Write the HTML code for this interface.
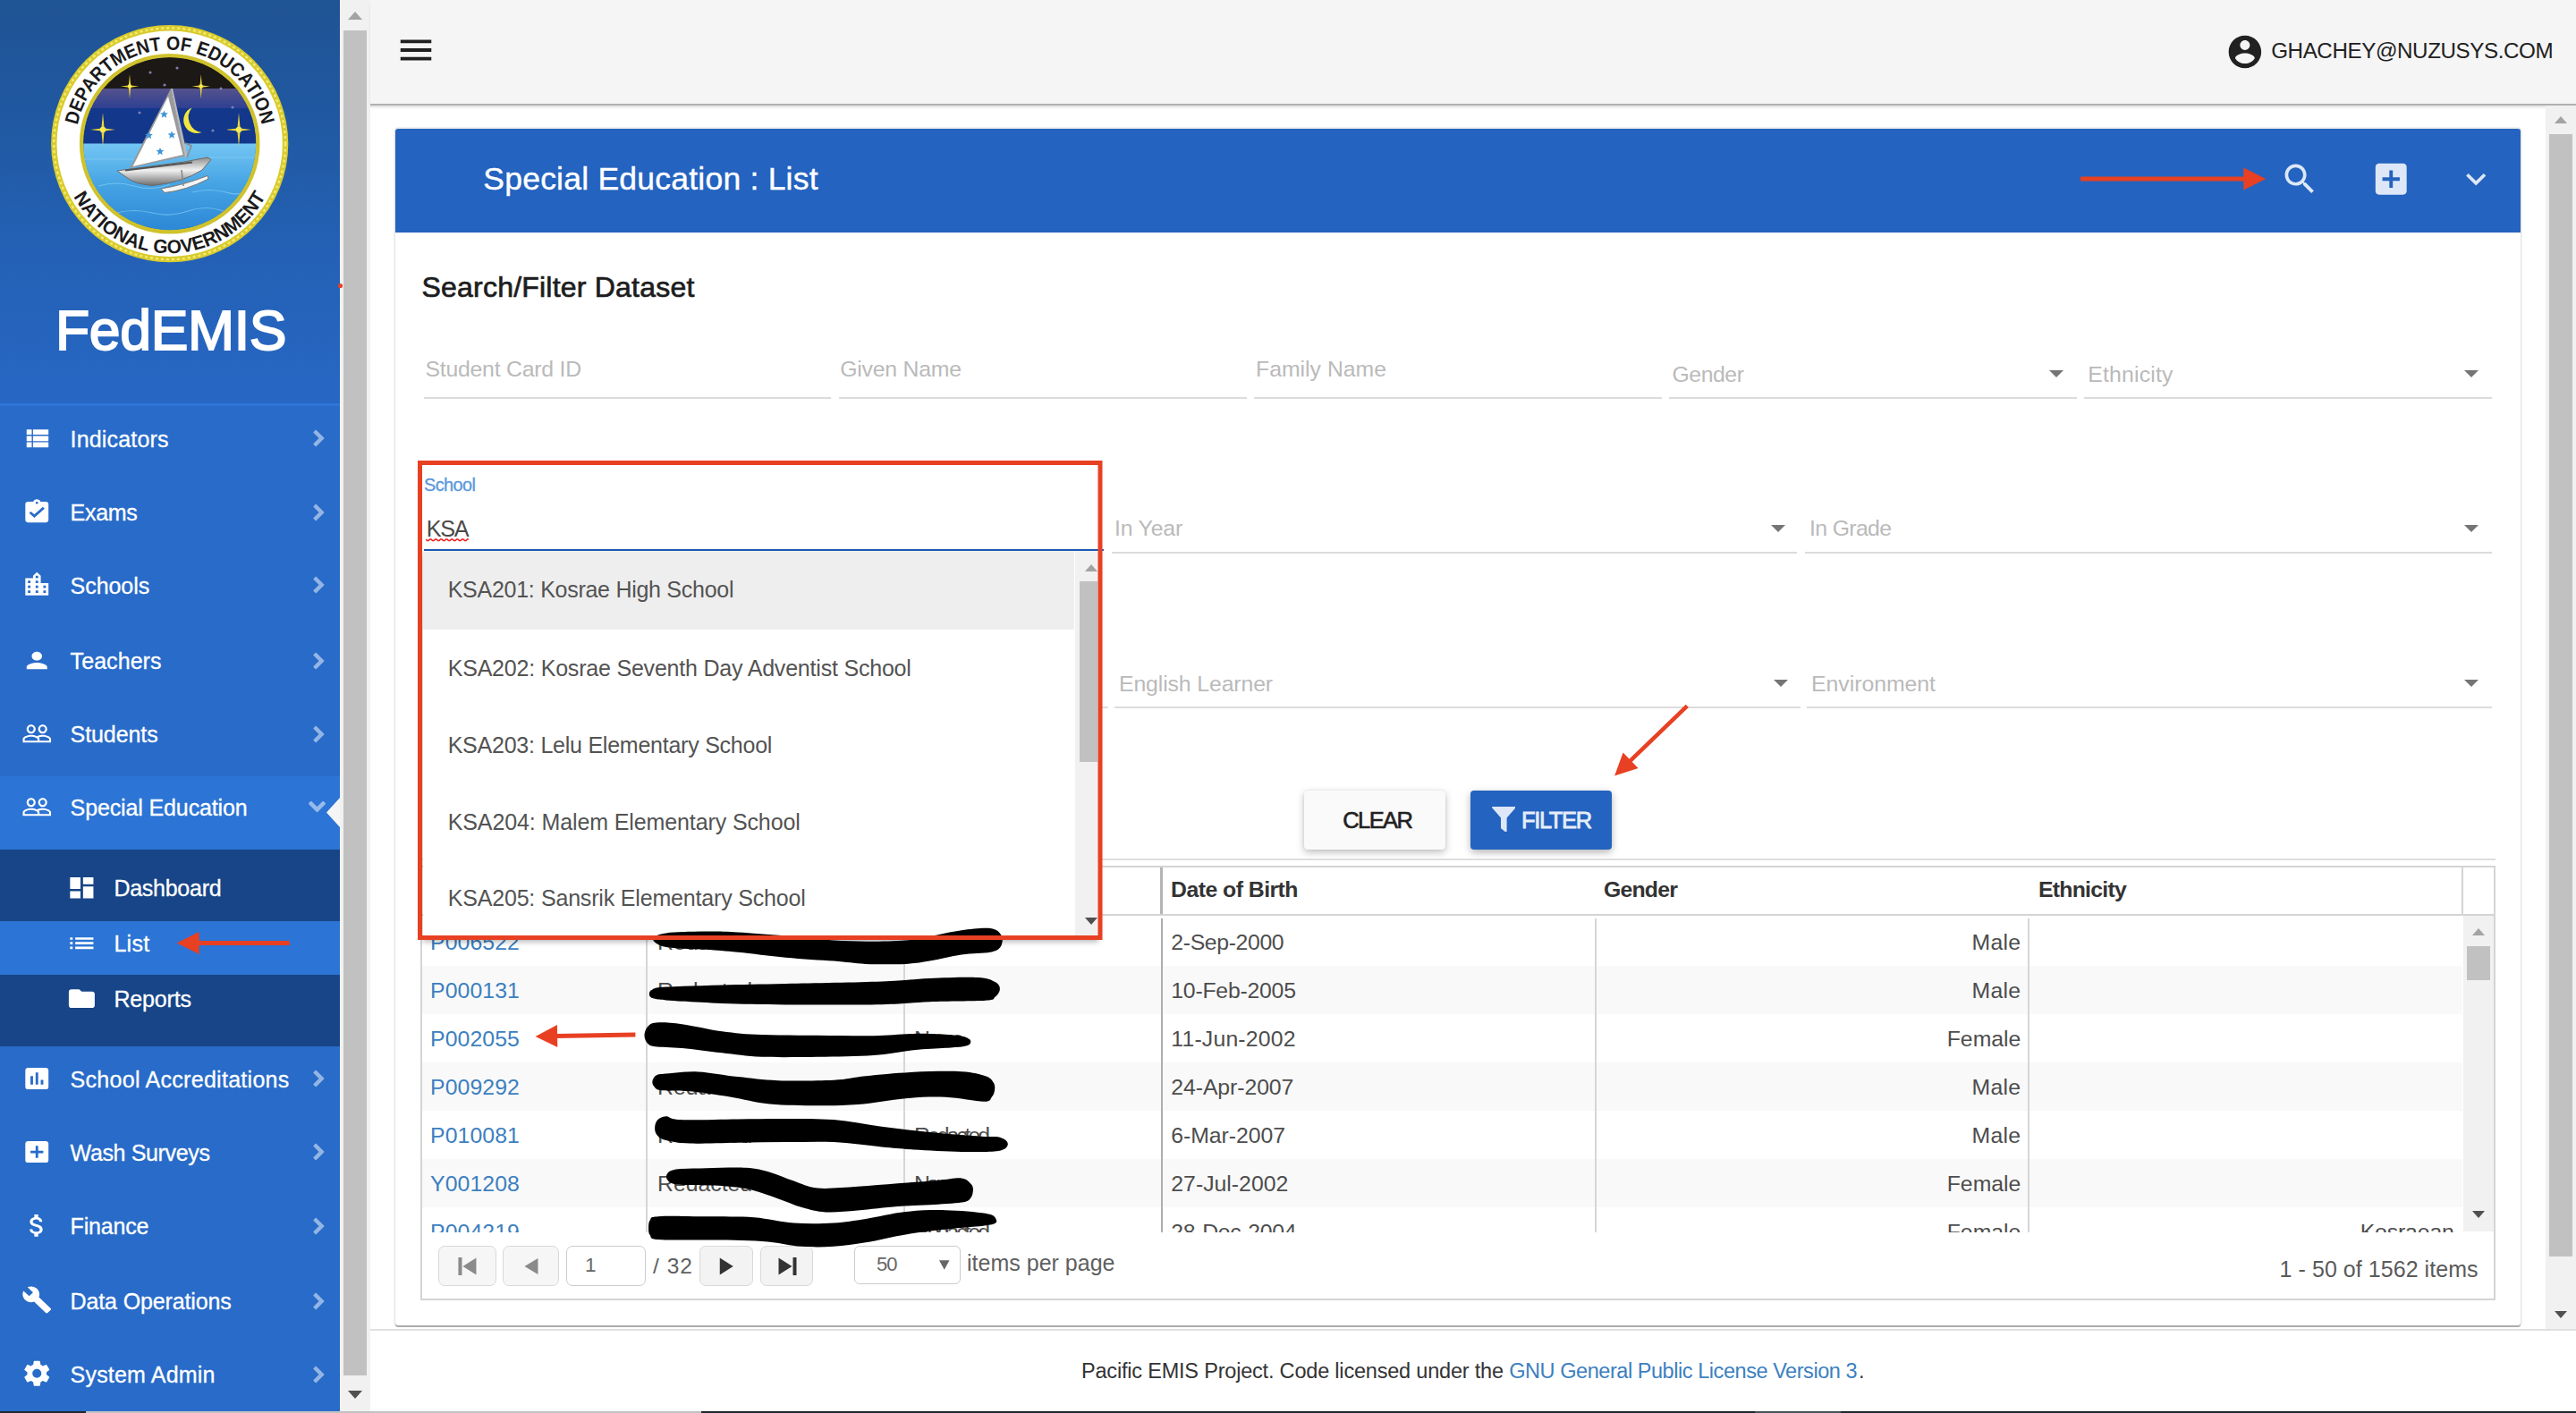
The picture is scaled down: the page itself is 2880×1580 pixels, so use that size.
<!DOCTYPE html>
<html lang="en">
<head>
<meta charset="utf-8">
<title>FedEMIS - Special Education : List</title>
<style>
html,body{margin:0;padding:0;}
body{width:2880px;height:1580px;overflow:hidden;position:relative;background:#fff;font-family:"Liberation Sans",sans-serif;}
.t{position:absolute;white-space:pre;line-height:1;margin:0;padding:0;text-decoration:none;font-weight:400;}
.ic{position:absolute;display:block;overflow:visible;}
.abs{position:absolute;}
#sidebar{position:absolute;left:0;top:0;width:380px;height:1578px;overflow:hidden;background:#286bc9;}
#sidebar .brand{position:absolute;left:0;top:0;width:380px;height:452px;background:linear-gradient(180deg,#1f5494 0px,#2058a0 120px,#2461b6 290px,#2767c4 452px);}
#sidebar ul{list-style:none;margin:0;padding:0;}
#sidebar li{margin:0;padding:0;}
.sbtrack{position:absolute;background:#f1f1f1;}
.sbthumb{position:absolute;background:#c1c1c1;}
#topbar{position:absolute;left:414px;top:0;width:2466px;height:116px;background:#f5f5f5;border-bottom:2px solid #b0b0b0;box-shadow:0 2px 0 #e6e6e6,0 3px 3px rgba(0,0,0,.06);}
#main{position:absolute;left:414px;top:118px;width:2432px;height:1366px;background:#fff;}
#panel{position:absolute;left:442px;top:144px;width:2376px;height:1338px;background:#fff;border-radius:3px;box-shadow:0 2px 0 0 #ababab,0 0 0 1.5px #e6e6e6;}
#panel .hd{position:absolute;left:0;top:0;width:2376px;height:116px;background:#2463bf;border-radius:3px 3px 0 0;}
.ul{position:absolute;height:2px;background:#dcdcdc;}
.arr{position:absolute;width:0;height:0;border-left:8px solid transparent;border-right:8px solid transparent;border-top:8px solid #757575;}

</style>
</head>
<body>
<nav id="sidebar">
<div class="brand">
<svg class="abs" style="left:0;top:0;width:380px;height:330px" viewBox="0 0 380 330"><defs><clipPath id="lgc"><circle cx="189.7" cy="160.7" r="96.5"/></clipPath><linearGradient id="lgsky" x1="0" y1="0" x2="0" y2="1"><stop offset="0" stop-color="#55528c"/><stop offset="1" stop-color="#2c3f93"/></linearGradient><linearGradient id="lgsea" x1="0" y1="0" x2="0" y2="1"><stop offset="0" stop-color="#73c6f3"/><stop offset="0.45" stop-color="#46a4e4"/><stop offset="1" stop-color="#2a86d6"/></linearGradient><linearGradient id="lghull" x1="0" y1="0" x2="0" y2="1"><stop offset="0" stop-color="#8d8d8d"/><stop offset="0.45" stop-color="#f2f2f2"/><stop offset="1" stop-color="#6e6e6e"/></linearGradient><path id="arcT" d="M 84.7 160.7 A 105 105 0 0 1 294.7 160.7"/><path id="arcB" d="M 67.2 160.7 A 122.5 122.5 0 0 0 312.2 160.7"/></defs><circle cx="189.7" cy="160.7" r="129.4" fill="#fff" stroke="#d9cb2e" stroke-width="6.4"/><circle cx="189.7" cy="160.7" r="129.4" fill="none" stroke="#f3ec74" stroke-width="2.4" stroke-dasharray="3 3"/><circle cx="189.7" cy="160.7" r="98.5" fill="#0f2f7d" stroke="#cfc22c" stroke-width="4.6"/><g clip-path="url(#lgc)"><rect x="90" y="60" width="200" height="42" fill="#1c1815"/><rect x="90" y="99" width="200" height="23" fill="url(#lgsky)"/><rect x="90" y="121" width="200" height="41" fill="#12378b"/><rect x="90" y="160.5" width="200" height="100" fill="url(#lgsea)"/><path d="M95 178 H150 M225 176 H285 M110 208 q20 -6 40 0 t40 -2 M215 215 q20 -5 38 0 t30 -4 M130 238 q20 -5 40 0 t40 -2 t40 0" stroke="#8fd3f7" stroke-width="1.2" fill="none" opacity=".6"/><path d="M0 -19 L1.6 -1.6 L14 0 L1.6 1.6 L0 19 L-1.6 1.6 L-14 0 L-1.6 -1.6 Z" transform="translate(145 96.6) scale(0.72)" fill="#e9d53a"/><circle cx="145" cy="96.6" r="2.3" fill="#f7ea58"/><path d="M0 -19 L1.6 -1.6 L14 0 L1.6 1.6 L0 19 L-1.6 1.6 L-14 0 L-1.6 -1.6 Z" transform="translate(224.7 96.6) scale(0.72)" fill="#e9d53a"/><circle cx="224.7" cy="96.6" r="2.3" fill="#f7ea58"/><path d="M0 -19 L1.6 -1.6 L14 0 L1.6 1.6 L0 19 L-1.6 1.6 L-14 0 L-1.6 -1.6 Z" transform="translate(115 145) scale(1.0)" fill="#e9d53a"/><circle cx="115" cy="145" r="3.2" fill="#f7ea58"/><path d="M0 -19 L1.6 -1.6 L14 0 L1.6 1.6 L0 19 L-1.6 1.6 L-14 0 L-1.6 -1.6 Z" transform="translate(267 145) scale(1.0)" fill="#e9d53a"/><circle cx="267" cy="145" r="3.2" fill="#f7ea58"/><circle cx="168" cy="81" r="1.6" fill="#7d7fae"/><circle cx="198" cy="76" r="1.6" fill="#7d7fae"/><circle cx="184" cy="95" r="1.6" fill="#7d7fae"/><circle cx="247" cy="99" r="1.6" fill="#7d7fae"/><circle cx="156" cy="126" r="1.6" fill="#7d7fae"/><circle cx="260" cy="120" r="1.6" fill="#7d7fae"/><circle cx="238" cy="146" r="1.6" fill="#7d7fae"/><path d="M214.5 120.5 a14.5 14.5 0 1 0 11 27.5 a17 17 0 0 1 -11 -27.5z" fill="#f4e640"/><path d="M145 188 L191 99 L207.5 174.5 Z" fill="#9a9a9a"/><path d="M148.5 186 L188 108 L204.5 173 Z" fill="#ffffff"/><path d="M191 99 L193 99 L210 176 L207 176 Z" fill="#b9b9b9"/><polygon points="183.5,123.4 184.7,126.3 187.9,126.6 185.5,128.6 186.2,131.7 183.5,130.1 180.8,131.7 181.5,128.6 179.1,126.6 182.3,126.3" fill="#3f95d6"/><polygon points="166.5,146.9 167.7,149.8 170.9,150.1 168.5,152.1 169.2,155.2 166.5,153.6 163.8,155.2 164.5,152.1 162.1,150.1 165.3,149.8" fill="#3f95d6"/><polygon points="192.0,146.4 193.2,149.3 196.4,149.6 194.0,151.6 194.7,154.7 192.0,153.1 189.3,154.7 190.0,151.6 187.6,149.6 190.8,149.3" fill="#3f95d6"/><polygon points="179.0,164.9 180.2,167.8 183.4,168.1 181.0,170.1 181.7,173.2 179.0,171.6 176.3,173.2 177.0,170.1 174.6,168.1 177.8,167.8" fill="#3f95d6"/><path d="M131 191 L206 181 L232 176 L236 178.5 L226 190 Q205 204 170 207.5 Q150 206 141 198 Z" fill="url(#lghull)" stroke="#6a6a6a" stroke-width="1"/><path d="M140 190.5 L215 181.5" stroke="#555" stroke-width="2" fill="none"/><path d="M180 211 Q205 207 232 196.5 L233 200 Q208 213 184 215.5 Z" fill="#f4f4f4" stroke="#777" stroke-width="1"/><path d="M203 190 L205 208 M209 176 L214 163 L207 160" stroke="#8a8a8a" stroke-width="1.6" fill="none"/></g><text font-family="'Liberation Sans',sans-serif" font-weight="700" font-size="21.5" fill="#1a1a1a" text-anchor="middle"><textPath href="#arcT" startOffset="50%" textLength="288" lengthAdjust="spacingAndGlyphs">DEPARTMENT OF EDUCATION</textPath></text><text font-family="'Liberation Sans',sans-serif" font-weight="700" font-size="21.5" fill="#1a1a1a" text-anchor="middle"><textPath href="#arcB" startOffset="50%" textLength="262" lengthAdjust="spacingAndGlyphs">NATIONAL GOVERNMENT</textPath></text></svg>
<h1 class="t" style="left:62.0px;top:337.8px;font-size:62.5px;letter-spacing:-0.357px;color:#fff;-webkit-text-stroke:1.9px #fff;">FedEMIS</h1>
</div>
<div class="abs" style="left:0;top:451px;width:380px;height:3px;background:#2f75d7"></div>
<div class="abs" style="left:0;top:868px;width:380px;height:82px;background:#2c74d5"></div>
<div class="abs" style="left:0;top:950px;width:380px;height:220px;background:#174587"></div>
<div class="abs" style="left:0;top:1030px;width:380px;height:60px;background:#2c74d5"></div>
<ul>
<li>
<svg class="ic" style="left:24.0px;top:472.9px;width:34.5px;height:34.5px;" viewBox="0 0 24 24"><path fill="#fff" d="M4 14h4v-4H4v4zm0 5h4v-4H4v4zM4 9h4V5H4v4zm5 5h12v-4H9v4zm0 5h12v-4H9v4zM9 5v4h12V5H9z"/></svg>
<a class="t" style="left:78.6px;top:478.8px;font-size:25px;letter-spacing:0.161px;color:#fff;-webkit-text-stroke:0.3px #fff;">Indicators</a>
<svg class="ic" style="left:338.9px;top:473.2px;width:34px;height:34.0px;opacity:.5;" viewBox="0 0 24 24"><path fill="#fff" stroke="#fff" stroke-width="1.2" stroke-linejoin="round" d="M10 6L8.59 7.41 13.17 12l-4.58 4.59L10 18l6-6z"/></svg>
</li>
<li>
<svg class="ic" style="left:24.0px;top:557.0px;width:34.5px;height:31.1px;" viewBox="0 0 24 24" preserveAspectRatio="none"><path fill="#fff" d="M19 3h-4.18C14.4 1.84 13.3 1 12 1c-1.3 0-2.4.84-2.82 2H5c-1.1 0-2 .9-2 2v14c0 1.1.9 2 2 2h14c1.1 0 2-.9 2-2V5c0-1.1-.9-2-2-2zm-7 0c.55 0 1 .45 1 1s-.45 1-1 1-1-.45-1-1 .45-1 1-1zm-2 14l-4-4 1.41-1.41L10 14.17l6.59-6.59L18 9l-8 8z"/></svg>
<a class="t" style="left:78.6px;top:561.1px;font-size:25px;letter-spacing:-0.281px;color:#fff;-webkit-text-stroke:0.3px #fff;">Exams</a>
<svg class="ic" style="left:338.9px;top:555.5px;width:34px;height:34.0px;opacity:.5;" viewBox="0 0 24 24"><path fill="#fff" stroke="#fff" stroke-width="1.2" stroke-linejoin="round" d="M10 6L8.59 7.41 13.17 12l-4.58 4.59L10 18l6-6z"/></svg>
</li>
<li>
<svg class="ic" style="left:24.0px;top:636.7px;width:34.5px;height:32.8px;" viewBox="0 0 24 24" preserveAspectRatio="none"><path fill="#fff" d="M15 11V5l-3-3-3 3v2H3v14h18V11h-6zm-8 8H5v-2h2v2zm0-4H5v-2h2v2zm0-4H5V9h2v2zm6 8h-2v-2h2v2zm0-4h-2v-2h2v2zm0-4h-2V9h2v2zm0-4h-2V5h2v2zm6 12h-2v-2h2v2zm0-4h-2v-2h2v2z"/></svg>
<a class="t" style="left:78.6px;top:642.7px;font-size:25px;letter-spacing:-0.065px;color:#fff;-webkit-text-stroke:0.3px #fff;">Schools</a>
<svg class="ic" style="left:338.9px;top:637.1px;width:34px;height:34.0px;opacity:.5;" viewBox="0 0 24 24"><path fill="#fff" stroke="#fff" stroke-width="1.2" stroke-linejoin="round" d="M10 6L8.59 7.41 13.17 12l-4.58 4.59L10 18l6-6z"/></svg>
</li>
<li>
<svg class="ic" style="left:24.0px;top:723.5px;width:34.5px;height:29.0px;" viewBox="0 0 24 24" preserveAspectRatio="none"><path fill="#fff" d="M12 12c2.21 0 4-1.79 4-4s-1.79-4-4-4-4 1.79-4 4 1.79 4 4 4zm0 2c-2.67 0-8 1.34-8 4v2h16v-2c0-2.66-5.33-4-8-4z"/></svg>
<a class="t" style="left:78.6px;top:727.1px;font-size:25px;letter-spacing:0.068px;color:#fff;-webkit-text-stroke:0.3px #fff;">Teachers</a>
<svg class="ic" style="left:338.9px;top:721.5px;width:34px;height:34.0px;opacity:.5;" viewBox="0 0 24 24"><path fill="#fff" stroke="#fff" stroke-width="1.2" stroke-linejoin="round" d="M10 6L8.59 7.41 13.17 12l-4.58 4.59L10 18l6-6z"/></svg>
</li>
<li>
<svg class="ic" style="left:24.0px;top:803.2px;width:34.5px;height:34.5px;" viewBox="0 0 24 24"><path fill="#fff" d="M16.5 13c-1.2 0-3.07.34-4.5 1-1.43-.67-3.3-1-4.5-1C5.33 13 1 14.08 1 16.25V19h22v-2.75c0-2.17-4.33-3.25-6.5-3.25zm-4 4.5h-10v-1.25c0-.54 2.56-1.75 5-1.75s5 1.21 5 1.75v1.25zm9 0H14v-1.25c0-.46-.2-.86-.52-1.22.88-.3 1.96-.53 3.02-.53 2.44 0 5 1.21 5 1.75v1.25zM7.5 12c1.93 0 3.5-1.57 3.5-3.5S9.43 5 7.5 5 4 6.57 4 8.5 5.57 12 7.5 12zm0-5.5c1.1 0 2 .9 2 2s-.9 2-2 2-2-.9-2-2 .9-2 2-2zm9 5.5c1.93 0 3.5-1.57 3.5-3.5S18.43 5 16.5 5 13 6.57 13 8.5s1.57 3.5 3.5 3.5zm0-5.5c1.1 0 2 .9 2 2s-.9 2-2 2-2-.9-2-2 .9-2 2-2z"/></svg>
<a class="t" style="left:78.6px;top:809.1px;font-size:25px;letter-spacing:-0.086px;color:#fff;-webkit-text-stroke:0.3px #fff;">Students</a>
<svg class="ic" style="left:338.9px;top:803.5px;width:34px;height:34.0px;opacity:.5;" viewBox="0 0 24 24"><path fill="#fff" stroke="#fff" stroke-width="1.2" stroke-linejoin="round" d="M10 6L8.59 7.41 13.17 12l-4.58 4.59L10 18l6-6z"/></svg>
</li>
<li>
<svg class="ic" style="left:24.0px;top:885.0px;width:34.5px;height:34.5px;" viewBox="0 0 24 24"><path fill="#fff" d="M16.5 13c-1.2 0-3.07.34-4.5 1-1.43-.67-3.3-1-4.5-1C5.33 13 1 14.08 1 16.25V19h22v-2.75c0-2.17-4.33-3.25-6.5-3.25zm-4 4.5h-10v-1.25c0-.54 2.56-1.75 5-1.75s5 1.21 5 1.75v1.25zm9 0H14v-1.25c0-.46-.2-.86-.52-1.22.88-.3 1.96-.53 3.02-.53 2.44 0 5 1.21 5 1.75v1.25zM7.5 12c1.93 0 3.5-1.57 3.5-3.5S9.43 5 7.5 5 4 6.57 4 8.5 5.57 12 7.5 12zm0-5.5c1.1 0 2 .9 2 2s-.9 2-2 2-2-.9-2-2 .9-2 2-2zm9 5.5c1.93 0 3.5-1.57 3.5-3.5S18.43 5 16.5 5 13 6.57 13 8.5s1.57 3.5 3.5 3.5zm0-5.5c1.1 0 2 .9 2 2s-.9 2-2 2-2-.9-2-2 .9-2 2-2z"/></svg>
<a class="t" style="left:78.6px;top:890.8px;font-size:25px;letter-spacing:-0.126px;color:#fff;-webkit-text-stroke:0.3px #fff;">Special Education</a>
<svg class="ic" style="left:337.3px;top:883.7px;width:35px;height:35.0px;opacity:.5;" viewBox="0 0 24 24"><path fill="#fff" stroke="#fff" stroke-width="1.1" stroke-linejoin="round" d="M16.59 8.59L12 13.17 7.41 8.59 6 10l6 6 6-6z"/></svg>
<ul>
<li>
<svg class="ic" style="left:73.5px;top:976.6px;width:34.8px;height:31.3px;" viewBox="0 0 24 24" preserveAspectRatio="none"><path fill="#fff" d="M3 13h8V3H3v10zm0 8h8v-6H3v6zm10 0h8V11h-8v10zm0-18v6h8V3h-8z"/></svg>
<a class="t" style="left:127.4px;top:980.9px;font-size:25px;letter-spacing:-0.257px;color:#fff;-webkit-text-stroke:0.3px #fff;">Dashboard</a>
</li>
<li>
<svg class="ic" style="left:73.5px;top:1038.8px;width:34.8px;height:31.3px;" viewBox="0 0 24 24" preserveAspectRatio="none"><path fill="#fff" d="M3 13h2v-2H3v2zm0 4h2v-2H3v2zm0-8h2V7H3v2zm4 4h14v-2H7v2zm0 4h14v-2H7v2zM7 7v2h14V7H7z"/></svg>
<a class="t" style="left:127.4px;top:1043.1px;font-size:25px;letter-spacing:0.273px;color:#fff;-webkit-text-stroke:0.3px #fff;">List</a>
</li>
<li>
<svg class="ic" style="left:73.5px;top:1101.0px;width:34.8px;height:31.3px;" viewBox="0 0 24 24" preserveAspectRatio="none"><path fill="#fff" d="M10 4H4c-1.1 0-1.99.9-1.99 2L2 18c0 1.1.9 2 2 2h16c1.1 0 2-.9 2-2V8c0-1.1-.9-2-2-2h-8l-2-2z"/></svg>
<a class="t" style="left:127.4px;top:1105.3px;font-size:25px;letter-spacing:-0.135px;color:#fff;-webkit-text-stroke:0.3px #fff;">Reports</a>
</li>
</ul>
</li>
<li>
<svg class="ic" style="left:24.0px;top:1190.0px;width:34.5px;height:32.1px;" viewBox="0 0 24 24" preserveAspectRatio="none"><path fill="#fff" d="M19 3H5c-1.1 0-2 .9-2 2v14c0 1.1.9 2 2 2h14c1.1 0 2-.9 2-2V5c0-1.1-.9-2-2-2zM9 17H7v-7h2v7zm4 0h-2V7h2v10zm4 0h-2v-4h2v4z"/></svg>
<a class="t" style="left:78.6px;top:1194.6px;font-size:25px;letter-spacing:0.284px;color:#fff;-webkit-text-stroke:0.3px #fff;">School Accreditations</a>
<svg class="ic" style="left:338.9px;top:1189.0px;width:34px;height:34.0px;opacity:.5;" viewBox="0 0 24 24"><path fill="#fff" stroke="#fff" stroke-width="1.2" stroke-linejoin="round" d="M10 6L8.59 7.41 13.17 12l-4.58 4.59L10 18l6-6z"/></svg>
</li>
<li>
<svg class="ic" style="left:24.0px;top:1272.2px;width:34.5px;height:32.1px;" viewBox="0 0 24 24" preserveAspectRatio="none"><path fill="#fff" d="M19 3H5c-1.11 0-2 .9-2 2v14c0 1.1.89 2 2 2h14c1.1 0 2-.9 2-2V5c0-1.1-.9-2-2-2zm-2 10h-4v4h-2v-4H7v-2h4V7h2v4h4v2z"/></svg>
<a class="t" style="left:78.6px;top:1276.8px;font-size:25px;letter-spacing:-0.353px;color:#fff;-webkit-text-stroke:0.3px #fff;">Wash Surveys</a>
<svg class="ic" style="left:338.9px;top:1271.2px;width:34px;height:34.0px;opacity:.5;" viewBox="0 0 24 24"><path fill="#fff" stroke="#fff" stroke-width="1.2" stroke-linejoin="round" d="M10 6L8.59 7.41 13.17 12l-4.58 4.59L10 18l6-6z"/></svg>
</li>
<li>
<svg class="ic" style="left:24.0px;top:1353.6px;width:34.5px;height:32.8px;" viewBox="0 0 24 24" preserveAspectRatio="none"><path fill="#fff" d="M11.8 10.9c-2.27-.59-3-1.2-3-2.15 0-1.09 1.01-1.85 2.7-1.85 1.78 0 2.44.85 2.5 2.1h2.21c-.07-1.72-1.12-3.3-3.21-3.81V3h-3v2.16c-1.94.42-3.5 1.68-3.5 3.61 0 2.31 1.91 3.46 4.7 4.13 2.5.6 3 1.48 3 2.41 0 .69-.49 1.79-2.7 1.79-2.06 0-2.87-.92-2.98-2.1h-2.2c.12 2.19 1.76 3.42 3.68 3.83V21h3v-2.15c1.95-.37 3.5-1.5 3.5-3.55 0-2.84-2.43-3.81-4.7-4.4z"/></svg>
<a class="t" style="left:78.6px;top:1359.1px;font-size:25px;letter-spacing:-0.193px;color:#fff;-webkit-text-stroke:0.3px #fff;">Finance</a>
<svg class="ic" style="left:338.9px;top:1353.5px;width:34px;height:34.0px;opacity:.5;" viewBox="0 0 24 24"><path fill="#fff" stroke="#fff" stroke-width="1.2" stroke-linejoin="round" d="M10 6L8.59 7.41 13.17 12l-4.58 4.59L10 18l6-6z"/></svg>
</li>
<li>
<svg class="ic" style="left:24.0px;top:1437.1px;width:34.5px;height:32.8px;" viewBox="0 0 24 24" preserveAspectRatio="none"><path fill="#fff" d="M22.7 19l-9.1-9.1c.9-2.3.4-5-1.5-6.9-2-2-5-2.4-7.4-1.3L9 6 6 9 1.6 4.7C.4 7.1.9 10.1 2.9 12.1c1.9 1.9 4.6 2.4 6.9 1.5l9.1 9.1c.4.4 1 .4 1.4 0l2.3-2.3c.5-.4.5-1.1.1-1.4z"/></svg>
<a class="t" style="left:78.6px;top:1443.1px;font-size:25px;letter-spacing:-0.136px;color:#fff;-webkit-text-stroke:0.3px #fff;">Data Operations</a>
<svg class="ic" style="left:338.9px;top:1437.5px;width:34px;height:34.0px;opacity:.5;" viewBox="0 0 24 24"><path fill="#fff" stroke="#fff" stroke-width="1.2" stroke-linejoin="round" d="M10 6L8.59 7.41 13.17 12l-4.58 4.59L10 18l6-6z"/></svg>
</li>
<li>
<svg class="ic" style="left:24.0px;top:1519.3px;width:34.5px;height:33.5px;" viewBox="0 0 24 24" preserveAspectRatio="none"><path fill="#fff" d="M19.43 12.98c.04-.32.07-.64.07-.98s-.03-.66-.07-.98l2.11-1.65c.19-.15.24-.42.12-.64l-2-3.46c-.12-.22-.39-.3-.61-.22l-2.49 1c-.52-.4-1.08-.73-1.69-.98l-.38-2.65C14.46 2.18 14.25 2 14 2h-4c-.25 0-.46.18-.49.42l-.38 2.65c-.61.25-1.17.59-1.69.98l-2.49-1c-.23-.09-.49 0-.61.22l-2 3.46c-.13.22-.07.49.12.64l2.11 1.65c-.04.32-.07.65-.07.98s.03.66.07.98l-2.11 1.65c-.19.15-.24.42-.12.64l2 3.46c.12.22.39.3.61.22l2.49-1c.52.4 1.08.73 1.69.98l.38 2.65c.03.24.24.42.49.42h4c.25 0 .46-.18.49-.42l.38-2.65c.61-.25 1.17-.59 1.69-.98l2.49 1c.23.09.49 0 .61-.22l2-3.46c.12-.22.07-.49-.12-.64l-2.11-1.65zM12 15.5c-1.93 0-3.5-1.57-3.5-3.5s1.57-3.5 3.5-3.5 3.5 1.57 3.5 3.5-1.57 3.5-3.5 3.5z"/></svg>
<a class="t" style="left:78.6px;top:1525.1px;font-size:25px;letter-spacing:0.185px;color:#fff;-webkit-text-stroke:0.3px #fff;">System Admin</a>
<svg class="ic" style="left:338.9px;top:1519.5px;width:34px;height:34.0px;opacity:.5;" viewBox="0 0 24 24"><path fill="#fff" stroke="#fff" stroke-width="1.2" stroke-linejoin="round" d="M10 6L8.59 7.41 13.17 12l-4.58 4.59L10 18l6-6z"/></svg>
</li>
</ul>
<svg class="abs" style="left:364px;top:892px;width:16px;height:33px" viewBox="0 0 16 33"><path d="M16 0 L1 16.5 L16 33 Z" fill="#f5f5f5"/></svg>
</nav>
<div class="sbtrack" style="left:380px;top:0;width:34px;height:1578px"><div class="sbthumb" style="left:4px;top:34px;width:26px;height:1504px"></div><svg class="abs" style="left:9px;top:13px;width:16px;height:9px" viewBox="0 0 16 9"><path d="M8 0 L16 9 H0 Z" fill="#a3a3a3"/></svg><svg class="abs" style="left:9px;top:1555px;width:16px;height:9px" viewBox="0 0 16 9"><path d="M0 0 H16 L8 9 Z" fill="#505050"/></svg></div>
<div id="main"></div>
<header id="topbar"></header>
<svg class="ic" style="left:442.0px;top:33.0px;width:46px;height:46.0px;" viewBox="0 0 24 24"><path fill="#1f1f1f" d="M3 18h18v-2H3v2zm0-5h18v-2H3v2zm0-7v2h18V6H3z"/></svg>
<svg class="ic" style="left:2488.1px;top:35.9px;width:43.8px;height:43.8px;" viewBox="0 0 24 24"><path fill="#212121" d="M12 2C6.48 2 2 6.48 2 12s4.48 10 10 10 10-4.48 10-10S17.52 2 12 2zm0 3c1.66 0 3 1.34 3 3s-1.34 3-3 3-3-1.34-3-3 1.34-3 3-3zm0 14.2c-2.5 0-4.71-1.28-6-3.22.03-1.99 4-3.08 6-3.08 1.99 0 5.97 1.09 6 3.08-1.29 1.94-3.5 3.22-6 3.22z"/></svg>
<span class="t" style="left:2539.2px;top:45.0px;font-size:24.2px;letter-spacing:-0.416px;color:#212121;">GHACHEY@NUZUSYS.COM</span>
<div class="sbtrack" style="left:2846px;top:118px;width:34px;height:1368px"><div class="sbthumb" style="left:4px;top:32px;width:26px;height:1255px"></div><svg class="abs" style="left:10px;top:12px;width:14px;height:8px" viewBox="0 0 14 8"><path d="M7 0 L14 8 H0 Z" fill="#a3a3a3"/></svg><svg class="abs" style="left:10px;top:1348px;width:14px;height:8px" viewBox="0 0 14 8"><path d="M0 0 H14 L7 8 Z" fill="#505050"/></svg></div>
<div class="abs" style="left:414px;top:1486px;width:2466px;height:2px;background:#e0e0e0"></div>
<section id="panel"><div class="hd"></div></section>
<h2 class="t" style="left:540.3px;top:182.8px;font-size:35.5px;letter-spacing:0.228px;color:#fff;-webkit-text-stroke:0.4px #fff;">Special Education : List</h2>
<svg class="ic" style="left:2549.3px;top:178.3px;width:44.4px;height:44.4px;" viewBox="0 0 24 24"><path fill="#dde7f7" d="M15.5 14h-.79l-.28-.27C15.41 12.59 16 11.11 16 9.5 16 5.91 13.09 3 9.5 3S3 5.91 3 9.5 5.91 16 9.5 16c1.61 0 3.09-.59 4.23-1.57l.27.28v.79l5 4.99L20.49 19l-4.99-5zm-6 0C7.01 14 5 11.99 5 9.5S7.01 5 9.5 5 14 7.01 14 9.5 11.99 14 9.5 14z"/></svg>
<svg class="ic" style="left:2650.4px;top:176.9px;width:46.5px;height:46.5px;" viewBox="0 0 24 24"><path fill="#dde7f7" d="M19 3H5c-1.11 0-2 .9-2 2v14c0 1.1.89 2 2 2h14c1.1 0 2-.9 2-2V5c0-1.1-.9-2-2-2zm-2 10h-4v4h-2v-4H7v-2h4V7h2v4h4v2z"/></svg>
<svg class="ic" style="left:2745.6px;top:177.8px;width:44.4px;height:44.4px;" viewBox="0 0 24 24"><path fill="#dde7f7" d="M16.59 8.59L12 13.17 7.41 8.59 6 10l6 6 6-6z"/></svg>
<h3 class="t" style="left:471.5px;top:304.9px;font-size:32px;letter-spacing:0.211px;color:#1d1d1d;-webkit-text-stroke:0.7px #1d1d1d;">Search/Filter Dataset</h3>
<div class="ul" style="left:474px;top:444px;width:455px"></div>
<label class="t" style="left:475.4px;top:401.3px;font-size:24.8px;letter-spacing:-0.214px;color:#bababa;">Student Card ID</label>
<div class="ul" style="left:938px;top:444px;width:456px"></div>
<label class="t" style="left:939.2px;top:401.3px;font-size:24.8px;letter-spacing:-0.231px;color:#bababa;">Given Name</label>
<div class="ul" style="left:1402px;top:444px;width:456px"></div>
<label class="t" style="left:1404.0px;top:401.3px;font-size:24.8px;color:#bababa;">Family Name</label>
<div class="ul" style="left:1866px;top:444px;width:456px"></div>
<label class="t" style="left:1869.5px;top:407.2px;font-size:24.8px;letter-spacing:-0.453px;color:#bababa;">Gender</label>
<div class="arr" style="left:2291px;top:413.5px"></div>
<div class="ul" style="left:2330px;top:444px;width:456px"></div>
<label class="t" style="left:2334.3px;top:407.2px;font-size:24.8px;letter-spacing:0.187px;color:#bababa;">Ethnicity</label>
<div class="arr" style="left:2755.3px;top:413.5px"></div>
<div class="ul" style="left:1243px;top:616.5px;width:766px"></div>
<label class="t" style="left:1246.0px;top:578.9px;font-size:24.8px;letter-spacing:-0.176px;color:#bababa;">In Year</label>
<div class="arr" style="left:1980px;top:586.5px"></div>
<div class="ul" style="left:2018px;top:616.5px;width:768px"></div>
<label class="t" style="left:2023.0px;top:578.9px;font-size:24.8px;letter-spacing:-0.637px;color:#bababa;">In Grade</label>
<div class="arr" style="left:2755px;top:586.5px"></div>
<div class="ul" style="left:1246px;top:789.5px;width:767px"></div>
<label class="t" style="left:1251.0px;top:752.9px;font-size:24.8px;letter-spacing:-0.113px;color:#bababa;">English Learner</label>
<div class="arr" style="left:1983px;top:760px"></div>
<div class="ul" style="left:2020px;top:789.5px;width:766px"></div>
<label class="t" style="left:2025.0px;top:752.9px;font-size:24.8px;letter-spacing:-0.020px;color:#bababa;">Environment</label>
<div class="arr" style="left:2755px;top:760px"></div>
<div class="ul" style="left:474px;top:789.5px;width:765px"></div>
<button class="abs" style="left:1458px;top:884px;width:158px;height:66px;border:0;padding:0;border-radius:4px;background:#fafafa;box-shadow:0 3px 8px rgba(0,0,0,.26),0 0 2px rgba(0,0,0,.1)"></button>
<span class="t" style="left:1501.3px;top:904.5px;font-size:25.5px;letter-spacing:-1.606px;color:#212121;-webkit-text-stroke:0.6px #212121;">CLEAR</span>
<button class="abs" style="left:1644px;top:884px;width:158px;height:66px;border:0;padding:0;border-radius:4px;background:#2463bf;box-shadow:0 3px 8px rgba(0,0,0,.3)"></button>
<svg class="abs" style="left:1667.8px;top:901.8px;width:26.6px;height:28.6px" viewBox="0 0 26.6 28.6"><path d="M0.6 0 H26 Q27 0.4 26.2 1.6 L16.6 12.6 V27.6 Q16.2 28.9 15 28.2 L10.4 24.6 Q10 24.2 10 23.6 V12.6 L0.4 1.6 Q-0.4 0.4 0.6 0Z" fill="#dde7f7"/></svg>
<span class="t" style="left:1700.9px;top:904.5px;font-size:25.5px;letter-spacing:-1.326px;color:#e6edf9;-webkit-text-stroke:0.8px #e6edf9;">FILTER</span>
<div class="abs" style="left:470px;top:960px;width:2320px;height:2px;background:#dedede"></div>
<div class="abs" style="left:470px;top:968px;width:2316px;height:482px;border:2px solid #d4d4d4;background:#fff"></div>
<div class="abs" style="left:472px;top:970px;width:2316px;height:52px;background:#fff;border-bottom:2px solid #d4d4d4"></div>
<div class="abs" style="left:472px;top:1024px;width:2318px;height:354px;overflow:hidden">
<div class="abs" style="left:0;top:2px;width:2281px;height:54px;background:#fff"></div>
<a class="t" style="left:9.0px;top:17.8px;font-size:24.8px;letter-spacing:0.100px;color:#3c7fc0;">P006522</a>
<span class="t" style="left:263.0px;top:17.8px;font-size:24.8px;color:#4d4d4d;">Redacted</span>
<span class="t" style="left:550.0px;top:17.8px;font-size:24.8px;letter-spacing:-3.539px;color:#4d4d4d;">Name</span>
<span class="t" style="left:837.3px;top:17.8px;font-size:24.8px;letter-spacing:-0.359px;color:#4d4d4d;">2-Sep-2000</span>
<span class="t" style="left:1732.6px;top:17.8px;font-size:24.8px;letter-spacing:0.262px;color:#4d4d4d;">Male</span>
<div class="abs" style="left:0;top:56px;width:2281px;height:54px;background:#f9f9f9"></div>
<a class="t" style="left:9.0px;top:71.8px;font-size:24.8px;letter-spacing:0.100px;color:#3c7fc0;">P000131</a>
<span class="t" style="left:263.0px;top:71.8px;font-size:24.8px;color:#4d4d4d;">Redacted</span>
<span class="t" style="left:550.0px;top:71.8px;font-size:24.8px;letter-spacing:-3.539px;color:#4d4d4d;">Name</span>
<span class="t" style="left:837.3px;top:71.8px;font-size:24.8px;letter-spacing:-0.236px;color:#4d4d4d;">10-Feb-2005</span>
<span class="t" style="left:1732.6px;top:71.8px;font-size:24.8px;letter-spacing:0.262px;color:#4d4d4d;">Male</span>
<div class="abs" style="left:0;top:110px;width:2281px;height:54px;background:#fff"></div>
<a class="t" style="left:9.0px;top:125.8px;font-size:24.8px;letter-spacing:0.100px;color:#3c7fc0;">P002055</a>
<span class="t" style="left:263.0px;top:125.8px;font-size:24.8px;color:#4d4d4d;">Name</span>
<span class="t" style="left:550.0px;top:125.8px;font-size:24.8px;letter-spacing:-3.539px;color:#4d4d4d;">Name</span>
<span class="t" style="left:837.3px;top:125.8px;font-size:24.8px;letter-spacing:0.181px;color:#4d4d4d;">11-Jun-2002</span>
<span class="t" style="left:1704.7px;top:125.8px;font-size:24.8px;color:#4d4d4d;">Female</span>
<div class="abs" style="left:0;top:164px;width:2281px;height:54px;background:#f9f9f9"></div>
<a class="t" style="left:9.0px;top:179.8px;font-size:24.8px;letter-spacing:0.100px;color:#3c7fc0;">P009292</a>
<span class="t" style="left:263.0px;top:179.8px;font-size:24.8px;color:#4d4d4d;">Redacted</span>
<span class="t" style="left:550.0px;top:179.8px;font-size:24.8px;letter-spacing:-3.539px;color:#4d4d4d;">Name</span>
<span class="t" style="left:837.3px;top:179.8px;font-size:24.8px;letter-spacing:-0.078px;color:#4d4d4d;">24-Apr-2007</span>
<span class="t" style="left:1732.6px;top:179.8px;font-size:24.8px;letter-spacing:0.262px;color:#4d4d4d;">Male</span>
<div class="abs" style="left:0;top:218px;width:2281px;height:54px;background:#fff"></div>
<a class="t" style="left:9.0px;top:233.8px;font-size:24.8px;letter-spacing:0.100px;color:#3c7fc0;">P010081</a>
<span class="t" style="left:263.0px;top:233.8px;font-size:24.8px;color:#4d4d4d;">Redacted</span>
<span class="t" style="left:550.0px;top:233.8px;font-size:24.8px;letter-spacing:-3.020px;color:#4d4d4d;">Redacted</span>
<span class="t" style="left:837.3px;top:233.8px;font-size:24.8px;letter-spacing:-0.049px;color:#4d4d4d;">6-Mar-2007</span>
<span class="t" style="left:1732.6px;top:233.8px;font-size:24.8px;letter-spacing:0.262px;color:#4d4d4d;">Male</span>
<div class="abs" style="left:0;top:272px;width:2281px;height:54px;background:#f9f9f9"></div>
<a class="t" style="left:9.0px;top:287.8px;font-size:24.8px;letter-spacing:0.100px;color:#3c7fc0;">Y001208</a>
<span class="t" style="left:263.0px;top:287.8px;font-size:24.8px;color:#4d4d4d;">Redacted</span>
<span class="t" style="left:550.0px;top:287.8px;font-size:24.8px;letter-spacing:-3.539px;color:#4d4d4d;">Name</span>
<span class="t" style="left:837.3px;top:287.8px;font-size:24.8px;color:#4d4d4d;">27-Jul-2002</span>
<span class="t" style="left:1704.7px;top:287.8px;font-size:24.8px;color:#4d4d4d;">Female</span>
<div class="abs" style="left:0;top:326px;width:2281px;height:54px;background:#fff"></div>
<a class="t" style="left:9.0px;top:341.8px;font-size:24.8px;letter-spacing:0.100px;color:#3c7fc0;">P004219</a>
<span class="t" style="left:263.0px;top:341.8px;font-size:24.8px;color:#4d4d4d;">Name</span>
<span class="t" style="left:550.0px;top:341.8px;font-size:24.8px;letter-spacing:-3.020px;color:#4d4d4d;">Redacted</span>
<span class="t" style="left:837.3px;top:341.8px;font-size:24.8px;letter-spacing:-0.305px;color:#4d4d4d;">28-Dec-2004</span>
<span class="t" style="left:1704.7px;top:341.8px;font-size:24.8px;color:#4d4d4d;">Female</span>
<span class="t" style="left:2166.7px;top:341.8px;font-size:24.8px;letter-spacing:-0.145px;color:#4d4d4d;">Kosraean</span>
<div class="abs" style="left:250px;top:3px;width:2px;height:354px;background:#d6d6d6"></div>
<div class="abs" style="left:538px;top:3px;width:2px;height:354px;background:#d6d6d6"></div>
<div class="abs" style="left:826px;top:3px;width:2px;height:354px;background:#adadad"></div>
<div class="abs" style="left:1311px;top:3px;width:2px;height:354px;background:#d6d6d6"></div>
<div class="abs" style="left:1795px;top:3px;width:2px;height:354px;background:#d6d6d6"></div>
</div>
<div class="abs" style="left:1297px;top:970px;width:3px;height:52px;background:#b4b4b4"></div>
<div class="abs" style="left:2752px;top:970px;width:2px;height:52px;background:#d4d4d4"></div>
<span class="t" style="left:481.0px;top:982.9px;font-size:24.8px;font-weight:700;color:#333;">Student Card ID</span>
<span class="t" style="left:735.0px;top:982.9px;font-size:24.8px;font-weight:700;color:#333;">Given Name</span>
<span class="t" style="left:1022.0px;top:982.9px;font-size:24.8px;font-weight:700;color:#333;">Family Name</span>
<span class="t" style="left:1309.0px;top:982.9px;font-size:24.8px;font-weight:700;letter-spacing:-0.523px;color:#333;">Date of Birth</span>
<span class="t" style="left:1793.0px;top:982.9px;font-size:24.8px;font-weight:700;letter-spacing:-0.805px;color:#333;">Gender</span>
<span class="t" style="left:2279.0px;top:982.9px;font-size:24.8px;font-weight:700;letter-spacing:-0.747px;color:#333;">Ethnicity</span>
<div class="sbtrack" style="left:2754px;top:1024px;width:34px;height:352.5px"><div class="sbthumb" style="left:4px;top:34px;width:26px;height:38px"></div><svg class="abs" style="left:10px;top:14px;width:14px;height:8px" viewBox="0 0 14 8"><path d="M7 0 L14 8 H0 Z" fill="#a3a3a3"/></svg><svg class="abs" style="left:10px;top:330px;width:14px;height:8px" viewBox="0 0 14 8"><path d="M0 0 H14 L7 8 Z" fill="#505050"/></svg></div>
<div class="abs" style="left:490.3px;top:1393px;width:62.900000000000034px;height:43px;border:1.5px solid #d9d9d9;border-radius:7px;background:#f6f6f6"><svg class="abs" style="left:0;top:0;width:62.900000000000034px;height:43px"><path d="M21.450000000000017 12 h4 v20 h-4z M41.45000000000002 12.5 v19 L26.450000000000017 22z" fill="#8a8a8a"/></svg></div>
<div class="abs" style="left:562.4px;top:1393px;width:60.89999999999998px;height:43px;border:1.5px solid #d9d9d9;border-radius:7px;background:#f6f6f6"><svg class="abs" style="left:0;top:0;width:60.89999999999998px;height:43px"><path d="M38.44999999999999 13 v18 L23.44999999999999 22z" fill="#8a8a8a"/></svg></div>
<div class="abs" style="left:632.5px;top:1393px;width:87px;height:43px;border:1px solid #ccc;border-radius:7px;background:#fff"></div>
<span class="t" style="left:654.0px;top:1403.5px;font-size:22.5px;color:#666;">1</span>
<span class="t" style="left:730.0px;top:1404.0px;font-size:24.5px;letter-spacing:1.031px;color:#5f5f5f;">/ 32</span>
<div class="abs" style="left:782px;top:1393px;width:57.5px;height:43px;border:1.5px solid #d9d9d9;border-radius:7px;background:#f3f3f3"><svg class="abs" style="left:0;top:0;width:57.5px;height:43px"><path d="M21.75 12.5 v19 L36.75 22z" fill="#333"/></svg></div>
<div class="abs" style="left:850.3px;top:1393px;width:57.0px;height:43px;border:1.5px solid #d9d9d9;border-radius:7px;background:#f3f3f3"><svg class="abs" style="left:0;top:0;width:57.0px;height:43px"><path d="M35.5 12 h4 v20 h-4z M19.5 12.5 v19 L34.5 22z" fill="#333"/></svg></div>
<div class="abs" style="left:954.6px;top:1393px;width:117px;height:41px;border:1px solid #ccc;border-radius:6px;background:#fff"></div>
<span class="t" style="left:980.0px;top:1403.3px;font-size:22px;letter-spacing:-0.992px;color:#666;">50</span>
<svg class="abs" style="left:1050px;top:1408.5px;width:11.5px;height:11px" viewBox="0 0 12 11"><path d="M0 0 H12 L6 11 Z" fill="#666"/></svg>
<span class="t" style="left:1081.0px;top:1400.2px;font-size:25px;letter-spacing:0.009px;color:#5f5f5f;">items per page</span>
<span class="t" style="left:2548.6px;top:1407.3px;font-size:25px;letter-spacing:0.052px;color:#5a5a5a;">1 - 50 of 1562 items</span>
<div class="abs" style="left:473px;top:617px;width:755px;height:434px;background:#fff;box-shadow:0 2px 6px rgba(0,0,0,.3);overflow:hidden">
<div class="abs" style="left:0;top:0;width:728px;height:87px;background:#eeeeee"></div>
<ul style="list-style:none;margin:0;padding:0">
<li>
<span class="t" style="left:27.7px;top:30.0px;font-size:25px;letter-spacing:-0.273px;color:#535353;">KSA201: Kosrae High School</span>
</li>
<li>
<span class="t" style="left:27.7px;top:117.5px;font-size:25px;letter-spacing:-0.203px;color:#535353;">KSA202: Kosrae Seventh Day Adventist School</span>
</li>
<li>
<span class="t" style="left:27.7px;top:203.5px;font-size:25px;letter-spacing:-0.239px;color:#535353;">KSA203: Lelu Elementary School</span>
</li>
<li>
<span class="t" style="left:27.7px;top:289.6px;font-size:25px;letter-spacing:-0.110px;color:#535353;">KSA204: Malem Elementary School</span>
</li>
<li>
<span class="t" style="left:27.7px;top:375.4px;font-size:25px;letter-spacing:-0.175px;color:#535353;">KSA205: Sansrik Elementary School</span>
</li>
</ul>
<div class="sbtrack" style="left:729px;top:0;width:26px;height:434px"><div class="sbthumb" style="left:4.5px;top:33px;width:20px;height:202px"></div><svg class="abs" style="left:11px;top:14px;width:14px;height:8px" viewBox="0 0 14 8"><path d="M7 0 L14 8 H0 Z" fill="#a3a3a3"/></svg><svg class="abs" style="left:11px;top:409px;width:14px;height:8px" viewBox="0 0 14 8"><path d="M0 0 H14 L7 8 Z" fill="#505050"/></svg></div>
</div>
<label class="t" style="left:474.0px;top:532.9px;font-size:19.8px;letter-spacing:-0.497px;color:#5a97dd;-webkit-text-stroke:0.35px #5a97dd;">School</label>
<span class="t" style="left:476.8px;top:579.2px;font-size:25.2px;letter-spacing:-1.302px;color:#4a4a4a;">KSA</span>
<svg class="abs" style="left:476px;top:601.5px;width:50px;height:5px" viewBox="0 0 50 5"><path d="M0 1 l1.5 1.6 l1.5 0 l1.5 -1.6 l1.5 0 l1.5 1.6 l1.5 0 l1.5 -1.6 l1.5 0 l1.5 1.6 l1.5 0 l1.5 -1.6 l1.5 0 l1.5 1.6 l1.5 0 l1.5 -1.6 l1.5 0 l1.5 1.6 l1.5 0 l1.5 -1.6 l1.5 0 l1.5 1.6 l1.5 0 l1.5 -1.6 l1.5 0 l1.5 1.6 l1.5 0 l1.5 -1.6 l1.5 0 l1.5 1.6 l1.5 0 l1.5 -1.6 l1.5 0" fill="none" stroke="#f21d1d" stroke-width="1.5"/></svg>
<div class="abs" style="left:474px;top:613.8px;width:760px;height:2.3px;background:#1a57b4"></div>
<footer class="abs" style="left:414px;top:1488px;width:2466px;height:90px;background:#fff"></footer>
<span class="t" style="left:1209.0px;top:1521.5px;font-size:23.5px;letter-spacing:-0.196px;color:#333;">Pacific EMIS Project. Code licensed under the </span>
<a class="t" style="left:1687.2px;top:1521.5px;font-size:23.5px;letter-spacing:-0.443px;color:#3c7fc0;">GNU General Public License Version 3</a>
<span class="t" style="left:2078.0px;top:1521.5px;font-size:23.5px;color:#333;">.</span>
<div class="abs" style="left:0;top:1578px;width:2880px;height:2px;background:#20262e"></div>
<div class="abs" style="left:96px;top:1578px;width:688px;height:2px;background:#c2c2c2"></div>
<div class="abs" style="left:1962px;top:1578px;width:96px;height:2px;background:#46525a"></div>
<svg class="abs" style="left:0;top:0;width:2880px;height:1580px;pointer-events:none" viewBox="0 0 2880 1580">
<path d="M730.0 1050.0C730.0 1047.4 734.8 1044.8 744.6 1043.4C754.5 1042.0 775.9 1041.8 789.3 1041.6C802.7 1041.5 810.1 1041.7 825.0 1042.5C839.9 1043.3 857.7 1044.8 878.6 1046.4C899.4 1048.1 927.7 1051.5 950.0 1052.3C972.3 1053.2 997.6 1052.3 1012.5 1051.4C1027.4 1050.5 1028.9 1048.8 1039.3 1047.0C1049.7 1045.1 1063.7 1041.7 1075.0 1040.2C1086.3 1038.7 1099.7 1037.1 1107.1 1038.0C1114.6 1039.0 1117.7 1042.6 1119.6 1046.1C1121.6 1049.5 1120.8 1055.4 1118.8 1058.6C1116.7 1061.7 1114.4 1063.3 1107.1 1064.8C1099.9 1066.3 1086.3 1065.9 1075.0 1067.5C1063.7 1069.1 1049.7 1072.9 1039.3 1074.6C1028.9 1076.4 1024.4 1077.3 1012.5 1077.9C1000.6 1078.4 981.2 1078.4 967.9 1077.9C954.5 1077.3 947.0 1075.8 932.1 1074.6C917.3 1073.5 896.4 1072.4 878.6 1070.7C860.7 1069.1 839.9 1066.3 825.0 1064.8C810.1 1063.3 802.7 1062.7 789.3 1061.8C775.9 1060.8 754.5 1061.1 744.6 1059.1C734.8 1057.1 730.0 1052.6 730.0 1050.0Z" fill="#000"/>
<path d="M725.9 1111.2C725.9 1109.6 726.3 1107.7 729.5 1106.4C732.6 1105.1 731.7 1104.4 744.6 1103.6C757.6 1102.7 784.8 1102.0 807.1 1101.4C829.5 1100.8 848.8 1100.7 878.6 1100.0C908.3 1099.3 958.9 1098.5 985.7 1097.5C1012.5 1096.5 1021.4 1094.7 1039.3 1093.9C1057.1 1093.2 1080.7 1092.2 1092.9 1092.9C1105.1 1093.5 1108.3 1095.7 1112.5 1097.9C1116.7 1100.0 1117.9 1103.1 1117.9 1105.9C1117.9 1108.7 1115.2 1112.7 1112.5 1114.8C1109.8 1117.0 1114.0 1117.9 1101.8 1118.8C1089.6 1119.6 1058.6 1119.4 1039.3 1120.2C1019.9 1120.9 1012.5 1122.7 985.7 1123.2C958.9 1123.8 908.3 1123.6 878.6 1123.4C848.8 1123.2 829.5 1122.8 807.1 1122.0C784.8 1121.1 757.6 1119.4 744.6 1118.4C731.7 1117.4 732.6 1117.3 729.5 1116.1C726.3 1114.9 725.9 1112.9 725.9 1111.2Z" fill="#000"/>
<path d="M720.5 1157.1C720.7 1154.2 721.9 1150.1 724.1 1147.9C726.3 1145.6 727.5 1143.8 733.9 1143.4C740.3 1142.9 750.3 1143.5 762.5 1145.2C774.7 1146.8 792.3 1151.2 807.1 1153.2C822.0 1155.2 833.9 1156.4 851.8 1157.1C869.6 1157.9 893.5 1157.5 914.3 1157.7C935.1 1157.9 958.9 1158.5 976.8 1158.2C994.6 1157.9 1008.0 1156.1 1021.4 1155.9C1034.8 1155.7 1047.9 1156.3 1057.1 1156.8C1066.4 1157.3 1072.3 1158.0 1076.8 1158.9C1081.2 1159.8 1082.5 1161.1 1083.9 1162.1C1085.3 1163.2 1085.3 1164.3 1085.2 1165.4C1085.0 1166.4 1084.7 1167.6 1083.0 1168.4C1081.3 1169.2 1079.3 1169.8 1075.0 1170.4C1070.7 1170.9 1066.1 1171.1 1057.1 1171.8C1048.2 1172.4 1034.8 1172.9 1021.4 1174.3C1008.0 1175.7 994.6 1178.8 976.8 1180.0C958.9 1181.2 935.1 1181.5 914.3 1181.8C893.5 1182.1 869.6 1182.5 851.8 1181.8C833.9 1181.0 822.0 1179.0 807.1 1177.3C792.3 1175.7 775.0 1173.2 762.5 1172.0C750.0 1170.8 738.7 1171.2 732.1 1170.2C725.6 1169.1 725.1 1167.9 723.2 1165.7C721.3 1163.5 720.4 1160.1 720.5 1157.1Z" fill="#000"/>
<path d="M729.5 1208.6C729.9 1206.5 731.4 1203.7 733.9 1202.3C736.5 1201.0 736.9 1201.2 744.6 1200.5C752.4 1199.9 767.0 1197.8 780.4 1198.4C793.8 1199.0 810.1 1202.5 825.0 1204.1C839.9 1205.7 851.8 1207.6 869.6 1208.2C887.5 1208.8 915.8 1208.5 932.1 1207.7C948.5 1206.8 953.0 1204.7 967.9 1203.2C982.7 1201.7 1003.6 1199.6 1021.4 1198.8C1039.3 1197.9 1061.6 1197.5 1075.0 1198.2C1088.4 1199.0 1095.8 1201.2 1101.8 1203.2C1107.7 1205.2 1109.0 1207.8 1110.7 1210.4C1112.4 1212.9 1112.4 1215.7 1112.1 1218.4C1111.8 1221.1 1111.0 1224.2 1108.9 1226.4C1106.9 1228.7 1108.6 1231.7 1100.0 1231.8C1091.4 1231.8 1071.7 1227.4 1057.1 1226.8C1042.6 1226.2 1028.9 1226.8 1012.5 1228.2C996.1 1229.6 975.3 1233.7 958.9 1235.0C942.6 1236.3 930.7 1236.3 914.3 1236.2C897.9 1236.2 877.1 1236.1 860.7 1234.5C844.3 1232.8 831.0 1228.8 816.1 1226.4C801.2 1224.0 784.2 1221.4 771.4 1220.2C758.6 1219.0 746.0 1220.2 739.3 1219.3C732.6 1218.4 732.9 1216.6 731.2 1214.8C729.6 1213.0 729.0 1210.7 729.5 1208.6Z" fill="#000"/>
<path d="M732.1 1261.6C732.1 1258.8 732.7 1254.9 734.8 1252.7C736.9 1250.4 740.3 1248.3 744.6 1248.2C749.0 1248.1 747.3 1251.6 760.7 1252.1C774.1 1252.7 805.4 1251.6 825.0 1251.4C844.6 1251.2 860.7 1250.8 878.6 1250.9C896.4 1251.0 914.3 1250.7 932.1 1252.1C950.0 1253.6 967.9 1257.5 985.7 1259.8C1003.6 1262.1 1021.4 1264.3 1039.3 1266.1C1057.1 1267.9 1079.8 1269.6 1092.9 1270.5C1106.0 1271.5 1112.2 1270.3 1117.9 1271.8C1123.5 1273.3 1127.1 1276.9 1126.8 1279.5C1126.5 1282.0 1124.7 1285.6 1116.1 1287.0C1107.4 1288.4 1090.8 1288.1 1075.0 1287.9C1059.2 1287.6 1036.3 1286.2 1021.4 1285.4C1006.5 1284.5 1000.6 1283.9 985.7 1282.5C970.8 1281.1 950.0 1278.0 932.1 1277.1C914.3 1276.2 896.4 1277.1 878.6 1277.1C860.7 1277.2 842.9 1277.4 825.0 1277.7C807.1 1277.9 784.8 1279.0 771.4 1278.6C758.0 1278.1 750.7 1276.5 744.6 1275.0C738.5 1273.5 736.9 1271.9 734.8 1269.6C732.7 1267.4 732.1 1264.4 732.1 1261.6Z" fill="#000"/>
<path d="M745.0 1316.1C745.0 1313.4 746.2 1309.7 753.6 1308.0C761.0 1306.4 775.9 1306.6 789.3 1306.2C802.7 1305.9 822.0 1305.0 833.9 1305.7C845.8 1306.5 851.8 1308.2 860.7 1310.7C869.6 1313.2 878.6 1317.6 887.5 1320.5C896.4 1323.5 902.4 1327.5 914.3 1328.6C926.2 1329.6 944.0 1327.7 958.9 1326.8C973.8 1325.9 988.7 1324.3 1003.6 1323.2C1018.5 1322.1 1036.3 1321.0 1048.2 1320.0C1060.1 1319.0 1068.8 1316.8 1075.0 1317.5C1081.2 1318.2 1083.6 1321.8 1085.7 1324.1C1087.9 1326.4 1088.0 1328.6 1087.9 1331.2C1087.7 1333.9 1087.0 1337.9 1084.8 1340.2C1082.7 1342.4 1082.6 1343.5 1075.0 1344.6C1067.4 1345.8 1051.2 1346.6 1039.3 1347.3C1027.4 1348.1 1017.0 1348.1 1003.6 1349.1C990.2 1350.1 972.3 1352.5 958.9 1353.6C945.5 1354.6 933.6 1356.0 923.2 1355.4C912.8 1354.8 905.4 1352.5 896.4 1350.0C887.5 1347.5 878.6 1343.3 869.6 1340.2C860.7 1337.1 851.8 1333.5 842.9 1331.2C833.9 1329.0 826.5 1327.8 816.1 1326.8C805.7 1325.7 790.8 1325.4 780.4 1325.0C769.9 1324.6 759.5 1325.6 753.6 1324.1C747.7 1322.6 745.0 1318.8 745.0 1316.1Z" fill="#000"/>
<path d="M725.0 1373.2C725.0 1370.4 725.0 1366.5 726.8 1364.3C728.6 1362.1 725.3 1360.9 735.7 1360.2C746.1 1359.5 771.4 1360.0 789.3 1360.2C807.1 1360.4 826.5 1360.0 842.9 1361.2C859.2 1362.5 872.6 1366.5 887.5 1367.5C902.4 1368.5 918.8 1368.3 932.1 1367.5C945.5 1366.7 954.5 1364.9 967.9 1362.9C981.2 1360.8 997.6 1356.6 1012.5 1355.0C1027.4 1353.4 1042.3 1352.9 1057.1 1353.2C1072.0 1353.5 1092.4 1355.2 1101.8 1356.8C1111.2 1358.4 1112.5 1360.7 1113.4 1362.9C1114.3 1365.0 1116.5 1367.7 1107.1 1369.6C1097.8 1371.6 1072.9 1372.9 1057.1 1374.6C1041.4 1376.4 1027.4 1377.9 1012.5 1380.4C997.6 1382.8 981.2 1387.1 967.9 1389.3C954.5 1391.5 944.0 1393.0 932.1 1393.8C920.2 1394.5 909.8 1394.7 896.4 1393.8C883.0 1392.8 869.6 1389.0 851.8 1387.9C833.9 1386.7 808.6 1386.9 789.3 1386.6C769.9 1386.3 746.1 1387.0 735.7 1386.1C725.3 1385.2 728.6 1383.4 726.8 1381.2C725.0 1379.1 725.0 1376.0 725.0 1373.2Z" fill="#000"/>
<rect x="469.5" y="517.5" width="760.5" height="531" fill="none" stroke="#e84023" stroke-width="5"/>
<path d="M2326.0 200.0 L2510.3 200.0" stroke="#e84023" stroke-width="5.2" fill="none"/><path d="M2533.3 200.0 L2508.3 212.6 L2508.3 187.4Z" fill="#e84023"/>
<path d="M323.8 1054.5 L220.6 1054.5" stroke="#e84023" stroke-width="5.2" fill="none"/><path d="M197.6 1054.5 L222.6 1041.9 L222.6 1067.1Z" fill="#e84023"/>
<path d="M710.4 1157.0 L621.1 1158.6" stroke="#e84023" stroke-width="5" fill="none"/><path d="M598.6 1159.0 L622.9 1146.1 L623.3 1171.1Z" fill="#e84023"/>
<path d="M1886.3 789.3 L1821.7 851.6" stroke="#e84023" stroke-width="4.6" fill="none"/><path d="M1805.1 867.6 L1814.6 841.4 L1831.6 859.1Z" fill="#e84023"/>
<circle cx="380.5" cy="319.5" r="2.6" fill="#e84023"/>
</svg>
</body>
</html>
